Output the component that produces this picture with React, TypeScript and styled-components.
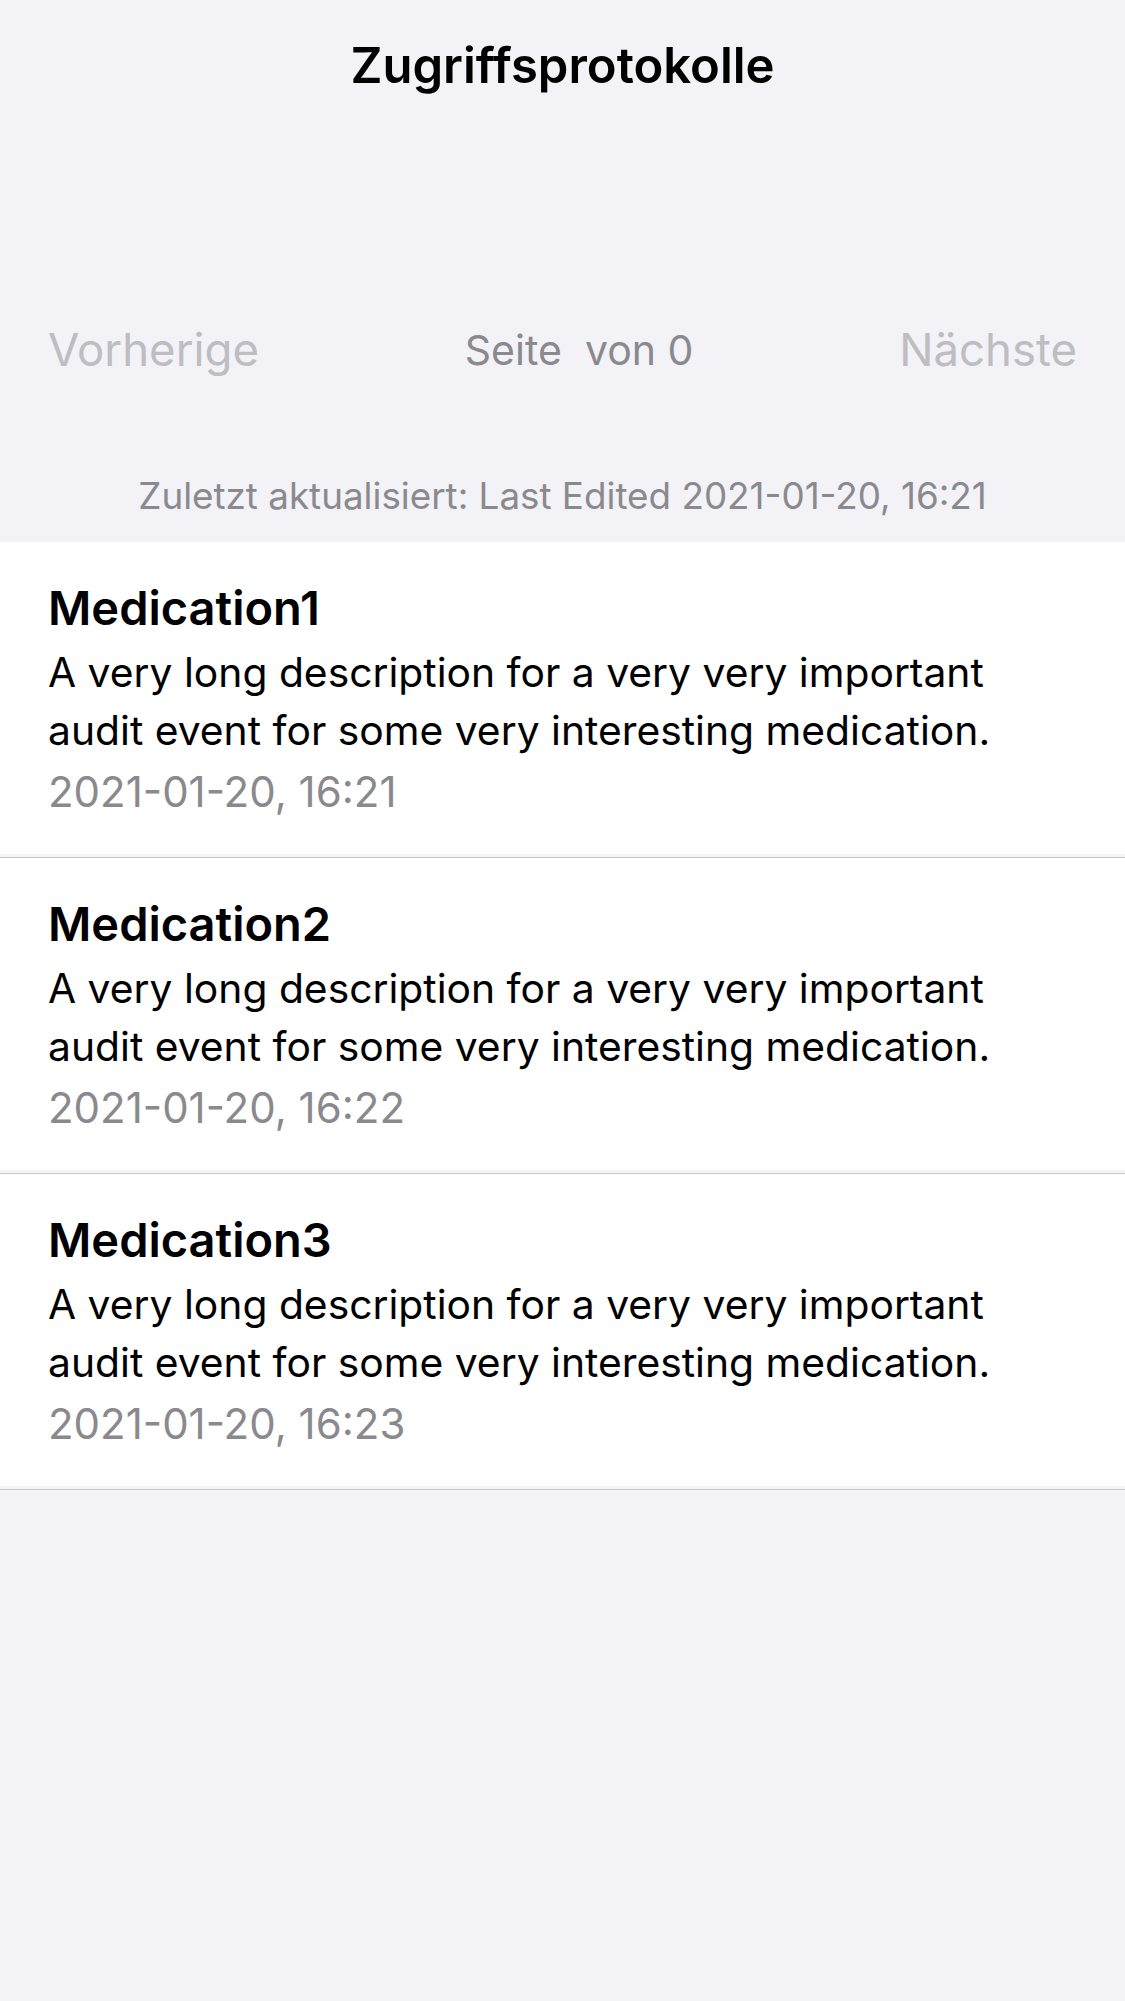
import React from 'react'
import styled, { createGlobalStyle } from 'styled-components'

const GlobalStyle = createGlobalStyle`
  html, body {
    margin: 0;
    padding: 0;
    background: #f2f2f7;
  }
  body {
    font-family: Inter, "Noto Sans", "Liberation Sans", sans-serif;
    -webkit-font-smoothing: antialiased;
  }
`

const Screen = styled.div`
  min-height: 2001px;
  background: #f2f2f7;
  display: flex;
  flex-direction: column;
`
const TitleBar = styled.header`
  height: 132px;
  display: flex;
  align-items: center;
  justify-content: center;
`
const Title = styled.h1`
  margin: 0;
  font-size: 49px;
  line-height: 58px;
  font-weight: 600;
  color: #000;
`
const Pager = styled.div`
  margin-top: 168px;
  height: 100px;
  padding: 0 48px;
  display: flex;
  align-items: center;
  justify-content: space-between;
`
const PagerButton = styled.button`
  border: none;
  background: none;
  padding: 0;
  font-family: inherit;
  font-size: 45.5px;
  line-height: 56px;
  color: ${(p) => (p.disabled ? '#bdbdc2' : '#007aff')};
`
const PageInfo = styled.span`
  font-size: 41px;
  line-height: 48px;
  color: #8a8a8e;
  white-space: pre;
`
const Updated = styled.p`
  margin: 0;
  padding: 74px 0 24px;
  text-align: center;
  font-size: 36.8px;
  line-height: 44px;
  color: #8a8a8e;
`
const List = styled.ul`
  list-style: none;
  margin: 0;
  padding: 0;
`
const Row = styled.li`
  padding-bottom: 3px;
  border-bottom: 1px solid #c6c6c8;
`
const Card = styled.div`
  background: #fff;
  padding: 38px 48px 37px;
`
const Heading = styled.h2`
  margin: 0;
  font-size: 47px;
  line-height: 56px;
  font-weight: 600;
  color: #000;
`
const Description = styled.p`
  margin: 7px 0 0;
  font-size: 40.8px;
  line-height: 58px;
  color: #000;
`
const Timestamp = styled.p`
  margin: 8px 0 0;
  font-size: 42px;
  line-height: 50px;
  color: #8a8a8e;
`

type AuditEvent = {
  name: string
  description: string
  date: string
}

const events: AuditEvent[] = [
  {
    name: 'Medication1',
    description: 'A very long description for a very very important audit event for some very interesting medication.',
    date: '2021-01-20, 16:21',
  },
  {
    name: 'Medication2',
    description: 'A very long description for a very very important audit event for some very interesting medication.',
    date: '2021-01-20, 16:22',
  },
  {
    name: 'Medication3',
    description: 'A very long description for a very very important audit event for some very interesting medication.',
    date: '2021-01-20, 16:23',
  },
]

export default function App() {
  return (
    <Screen>
      <GlobalStyle />
      <TitleBar>
        <Title>Zugriffsprotokolle</Title>
      </TitleBar>
      <Pager>
        <PagerButton disabled>Vorherige</PagerButton>
        <PageInfo>{'Seite  von 0'}</PageInfo>
        <PagerButton disabled>Nächste</PagerButton>
      </Pager>
      <Updated>Zuletzt aktualisiert: Last Edited 2021-01-20, 16:21</Updated>
      <List>
        {events.map((e) => (
          <Row key={e.name}>
            <Card>
              <Heading>{e.name}</Heading>
              <Description>{e.description}</Description>
              <Timestamp>{e.date}</Timestamp>
            </Card>
          </Row>
        ))}
      </List>
    </Screen>
  )
}
